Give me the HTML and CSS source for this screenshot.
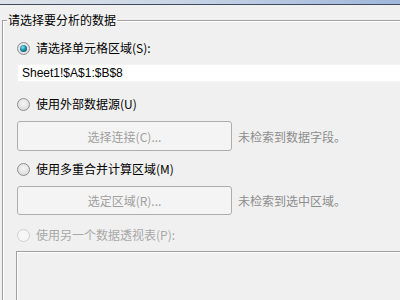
FILE: index.html
```html
<!DOCTYPE html>
<html lang="zh-CN">
<head>
  <meta charset="UTF-8">
  <link rel="stylesheet" href="styles.css">
  <title>创建数据透视表</title>
</head>
<body>
  <div class="titlebar"></div>

  <fieldset class="group">
    <legend>请选择要分析的数据</legend>

    <div class="opt">
      <span class="radio checked"></span>
      <span class="label">请选择单元格区域(S):</span>
    </div>
    <input class="range" type="text" value="Sheet1!$A$1:$B$8">

    <div class="opt opt-gap">
      <span class="radio"></span>
      <span class="label">使用外部数据源(U)</span>
    </div>
    <div class="btn-row">
      <button class="btn" disabled>选择连接(C)...</button>
      <span class="hint">未检索到数据字段。</span>
    </div>

    <div class="opt">
      <span class="radio"></span>
      <span class="label">使用多重合并计算区域(M)</span>
    </div>
    <div class="btn-row btn-row2">
      <button class="btn" disabled>选定区域(R)...</button>
      <span class="hint">未检索到选中区域。</span>
    </div>

    <div class="opt opt-last disabled">
      <span class="radio"></span>
      <span class="label">使用另一个数据透视表(P):</span>
    </div>
    <div class="list"></div>
  </fieldset>
</body>
</html>
```

FILE: styles.css
```css
html, body {
  margin: 0;
  height: 100%;
  overflow: hidden;
}

body {
  background: #f0f0f0;
  font-family: "Noto Sans CJK SC", "Noto Sans", sans-serif;
  font-size: 12px;
  color: #000;
}

.titlebar {
  height: 4px;
  background: linear-gradient(to right, #dfe3e8 0%, #c9d5e6 45%, #9fb6da 100%);
  border-bottom: 1px solid #3f4c5c;
}

.group {
  margin: 7px 0 0 2px;
  padding: 0;
  border: 1px solid #a0a0a0;
  border-right: none;
  border-bottom: none;
  box-shadow: inset 1px 1px 0 #fff;
}

.group legend {
  margin-left: 4px;
  padding: 0 1px;
  line-height: 16px;
}

.opt {
  display: flex;
  align-items: center;
  height: 16px;
  margin-top: 10px;
  padding-left: 14px;
}

.group legend + .opt {
  margin-top: 12px;
}

.opt-gap {
  margin-top: 14px;
}

.opt-last {
  margin-top: 12px;
}

.radio {
  width: 11px;
  height: 11px;
  border: 1px solid #8f8f8f;
  border-radius: 50%;
  background: radial-gradient(circle at 50% 40%, #f4f4f4 0%, #e2e2e2 60%, #d4d4d4 100%);
  box-sizing: content-box;
  position: relative;
  flex: none;
}

.radio.checked::after {
  content: "";
  position: absolute;
  left: 2px;
  top: 2px;
  width: 7px;
  height: 7px;
  border-radius: 50%;
  background: radial-gradient(circle at 40% 35%, #8fe4f4 0%, #1c8aa8 45%, #0a3d57 100%);
}

.label {
  margin-left: 6px;
  line-height: 16px;
}

.disabled .label {
  color: #a8a8a8;
}

.disabled .radio {
  border-color: #d0d0d0;
  background: #f6f6f6;
}

.range {
  display: block;
  box-sizing: border-box;
  width: calc(100% - 14px);
  height: 18px;
  margin: 8px 0 0 14px;
  padding: 0 4px;
  border: 1px solid #f3f3f3;
  border-right: none;
  background: #fff;
  font-family: "Liberation Sans", "Noto Sans CJK SC", sans-serif;
  font-size: 12px;
  color: #000;
  outline: none;
}

.btn-row {
  display: flex;
  align-items: center;
  margin: 9px 0 0 14px;
}

.btn-row2 {
  margin-top: 9px;
}

.btn {
  width: 215px;
  height: 30px;
  border: 1px solid #adadad;
  border-radius: 3px;
  background: #f4f4f4;
  font: inherit;
  color: #a0a0a0;
  padding: 0;
}

.btn-row2 .btn {
  height: 29px;
}

.hint {
  margin-left: 6px;
  color: #8d8d8d;
}

.list {
  margin: 8px 0 0 13px;
  height: 49px;
  border: 1px solid #a0a0a0;
  border-right: none;
  border-bottom: none;
  box-shadow: inset 1px 1px 0 #fff;
}
```
